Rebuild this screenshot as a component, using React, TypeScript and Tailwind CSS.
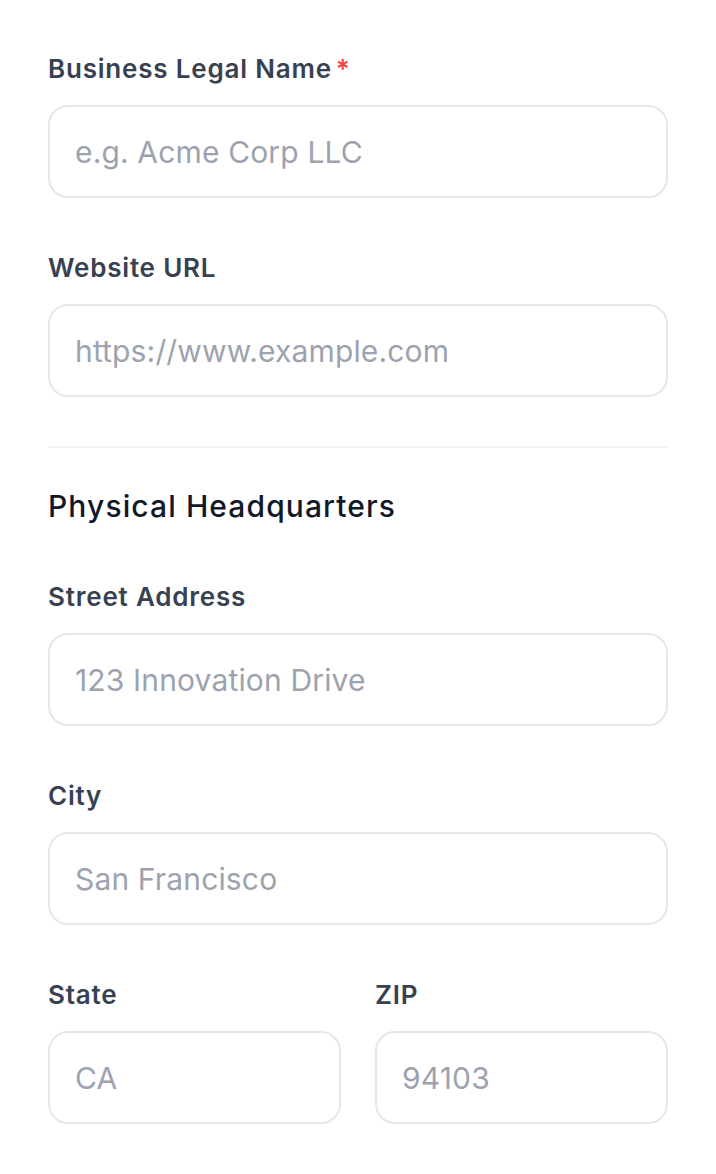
import React from 'react';

const font = { fontFamily: 'Inter, "Noto Sans", sans-serif' };

interface FieldProps {
  label: string;
  placeholder: string;
  required?: boolean;
  className?: string;
}

const Field: React.FC<FieldProps> = ({ label, placeholder, required, className }) => (
  <div className={className}>
    <label className="block text-[26px] leading-[36px] font-semibold text-[#374151] mb-[18px] tracking-[0.8px]">
      {label}
      {required && <span className="text-[#ef4444] ml-[4px]">*</span>}
    </label>
    <input
      type="text"
      placeholder={placeholder}
      className="block w-full h-[93px] rounded-[20px] border-2 border-[#e5e7eb] bg-white px-[25px] text-[30px] tracking-[0.15px] text-[#111827] placeholder:text-[#9ca3af] outline-none"
    />
  </div>
);

export default function App() {
  return (
    <div className="min-h-screen bg-white px-12 pt-[51px] pb-12" style={font}>
      <Field label="Business Legal Name" placeholder="e.g. Acme Corp LLC" required />
      <Field className="mt-[52px]" label="Website URL" placeholder="https://www.example.com" />

      {/* Divider */}
      <div className="mt-[49px] h-[2px] bg-[#f3f4f6]" />

      <h3 className="mt-[38px] text-[30px] leading-[40px] font-medium text-[#111827] tracking-[1.1px]">
        Physical Headquarters
      </h3>

      <Field className="mt-[53px]" label="Street Address" placeholder="123 Innovation Drive" />
      <Field className="mt-[52px]" label="City" placeholder="San Francisco" />

      <div className="mt-[52px] grid grid-cols-2 gap-[34px]">
        <Field label="State" placeholder="CA" />
        <Field label="ZIP" placeholder="94103" />
      </div>
    </div>
  );
}
